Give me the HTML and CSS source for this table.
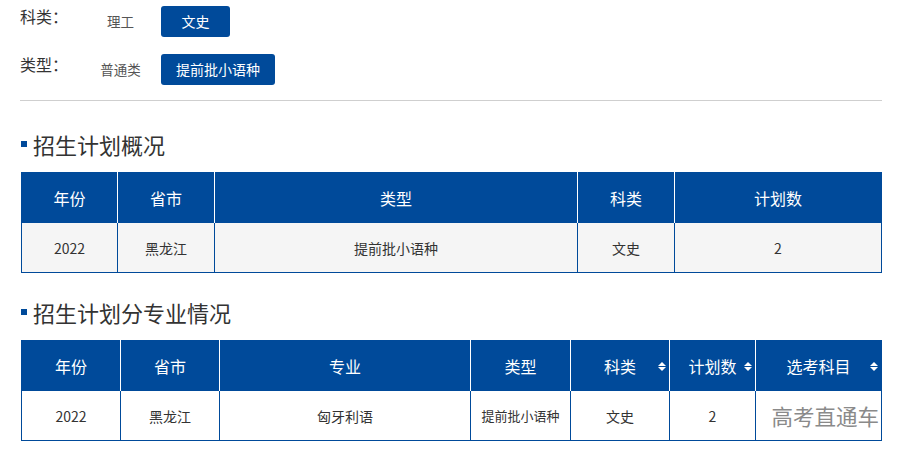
FILE: index.html
```html
<!DOCTYPE html>
<html lang="zh-CN">
<head>
<meta charset="utf-8">
<title>招生计划</title>
<link rel="stylesheet" href="styles.css">
</head>
<body>
<div class="page">
  <div class="filters">
    <div class="filter-row">
      <span class="filter-label">科类：</span>
      <span class="opt">理工</span>
      <span class="opt active">文史</span>
    </div>
    <div class="filter-row">
      <span class="filter-label">类型：</span>
      <span class="opt">普通类</span>
      <span class="opt active">提前批小语种</span>
    </div>
  </div>

  <h2 class="section-title">招生计划概况</h2>
  <table class="data t1">
    <colgroup>
      <col style="width:96px"><col style="width:97px"><col style="width:363px"><col style="width:97px"><col>
    </colgroup>
    <thead>
      <tr><th>年份</th><th>省市</th><th>类型</th><th>科类</th><th>计划数</th></tr>
    </thead>
    <tbody>
      <tr><td>2022</td><td>黑龙江</td><td>提前批小语种</td><td>文史</td><td>2</td></tr>
    </tbody>
  </table>

  <h2 class="section-title">招生计划分专业情况</h2>
  <table class="data t2">
    <colgroup>
      <col style="width:99px"><col style="width:99px"><col style="width:251px"><col style="width:100px"><col style="width:99px"><col style="width:86px"><col>
    </colgroup>
    <thead>
      <tr>
        <th>年份</th><th>省市</th><th>专业</th><th>类型</th>
        <th class="sortable">科类<span class="sort"></span></th>
        <th class="sortable">计划数<span class="sort"></span></th>
        <th class="sortable">选考科目<span class="sort"></span></th>
      </tr>
    </thead>
    <tbody>
      <tr>
        <td>2022</td><td>黑龙江</td><td>匈牙利语</td><td class="small">提前批小语种</td><td>文史</td><td>2</td>
        <td class="wm-cell"><span class="watermark">高考直通车</span></td>
      </tr>
    </tbody>
  </table>
</div>
</body>
</html>
```
FILE: styles.css
```css
* { box-sizing: border-box; }
html, body { margin: 0; padding: 0; background: #fff; }
body {
  font-family: "Noto Sans CJK SC", "Noto Sans", "Liberation Sans", sans-serif;
  color: #333;
}
.page {
  width: 861px;
  margin-left: 21px;
  padding-top: 6px;
}
.filters {
  display: flex;
  flex-direction: column;
  gap: 17px;
  padding-bottom: 15px;
  border-bottom: 1px solid #cfcfcf;
  margin-left: -1px;
}
.filter-row {
  display: flex;
  align-items: center;
  height: 31px;
}
.filter-label {
  width: 66px;
  font-size: 16px;
  color: #333;
  line-height: 31px;
  position: relative;
  top: -5px;
}
.opt {
  width: 69px;
  height: 31px;
  line-height: 31px;
  text-align: center;
  font-size: 13.5px;
  color: #555;
  margin-right: 6px;
}
.opt.active {
  width: auto;
  min-width: 69px;
  padding: 0 15px;
  background: #004a9a;
  color: #fff;
  border-radius: 3px;
  font-size: 14px;
}
.section-title {
  position: relative;
  margin: 28px 0 13px;
  padding-left: 12px;
  font-size: 22px;
  font-weight: normal;
  line-height: 30px;
  color: #333;
}
.section-title::before {
  content: "";
  position: absolute;
  left: 0;
  top: 12px;
  width: 6px;
  height: 6px;
  background: #004a9a;
}
.t1 + .section-title { margin-top: 24px; }
.data {
  width: 861px;
  border-collapse: collapse;
  table-layout: fixed;
  border: 1px solid #004a9a;
}
.data th {
  height: 50px;
  padding: 0;
  background: #004a9a;
  color: #fff;
  font-size: 16px;
  font-weight: normal;
  text-align: center;
  border-left: 1px solid #fff;
  border-right: 1px solid #fff;
}
.data th:first-child { border-left-color: #004a9a; }
.data th:last-child { border-right-color: #004a9a; }
.data td {
  height: 50px;
  padding: 0;
  text-align: center;
  font-size: 14px;
  color: #333;
  border: 1px solid #004a9a;
}
.t1 td { background: #f5f5f5; }
.t2 td { background: #fff; }
.data td.small { font-size: 13px; }
.sortable { position: relative; }
.sort {
  position: absolute;
  right: 3px;
  top: 50%;
  width: 8px;
  height: 9px;
  margin-top: -4px;
}
.sort::before,
.sort::after {
  content: "";
  position: absolute;
  left: 0;
  border-left: 4px solid transparent;
  border-right: 4px solid transparent;
}
.sort::before { top: 0; border-bottom: 4px solid #fff; }
.sort::after { bottom: 0; border-top: 4px solid #fff; }
.wm-cell { position: relative; }
.watermark {
  position: absolute;
  right: 2px;
  top: 50%;
  transform: translateY(-50%);
  font-size: 21.5px;
  color: #8a8a8a;
  white-space: nowrap;
  line-height: 1;
}
```
